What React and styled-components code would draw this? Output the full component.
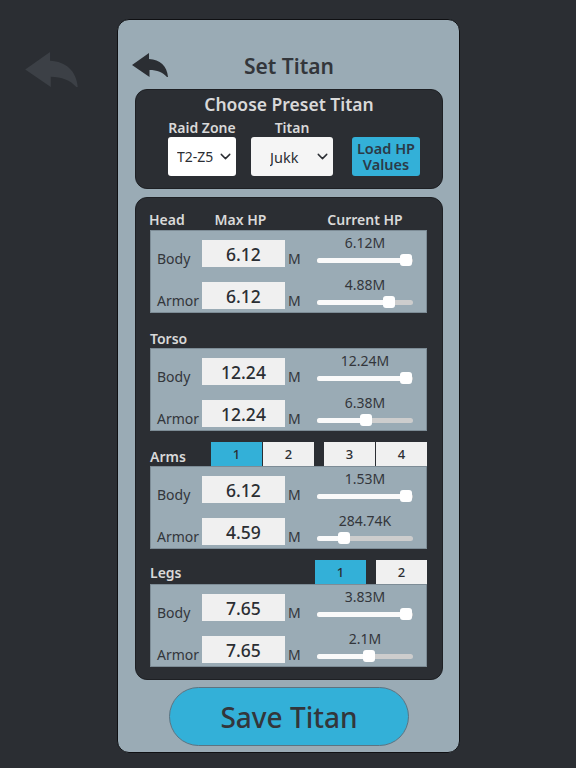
import React from "react";
import styled, { createGlobalStyle } from "styled-components";
import { ChevronDown } from "lucide-react";

const GlobalStyle = createGlobalStyle`
  * {
    box-sizing: border-box;
  }
  body {
    margin: 0;
    background-color: #2b2e33;
    font-family: "Noto Sans", "Open Sans", sans-serif;
    color: #2b2e33;
  }
`;

const Page = styled.div`
  position: relative;
  display: flex;
  justify-content: center;
  width: 576px;
  height: 768px;
  padding: 19px 0 0 1px;
`;

const GhostBack = styled.svg`
  position: absolute;
  left: 25px;
  top: 52px;
  width: 53px;
  height: 35px;
  fill: #3c4046;
`;

const Panel = styled.div`
  display: flex;
  flex-direction: column;
  width: 343px;
  height: 734px;
  padding: 0 16px 0 17px;
  background-color: #9aabb5;
  border: 1px solid #0f1013;
  border-radius: 12px;
`;

const Header = styled.div`
  display: grid;
  grid-template-columns: 36px 1fr 36px;
  align-items: center;
  height: 69px;
  padding-top: 31px;
  padding-bottom: 8px;
  h1 {
    margin: 0;
    font-size: 21px;
    line-height: 30px;
    font-weight: 600;
    text-align: center;
    color: #33363b;
  }
`;

const BackIcon = styled.svg`
  align-self: start;
  width: 36px;
  height: 24px;
  margin-left: -3px;
  margin-top: 2px;
  fill: #2b2e33;
`;

const Card = styled.div`
  background-color: #2b2e33;
  border: 1px solid #1e2024;
  border-radius: 12px;
`;

const PresetCard = styled(Card)`
  height: 100px;
  padding-top: 2px;
  h2 {
    margin: 0;
    font-size: 17.5px;
    line-height: 24px;
    font-weight: 600;
    text-align: center;
    color: #d9d9d9;
  }
`;

const PresetRow = styled.div`
  display: flex;
  align-items: flex-end;
  margin-top: 3px;
  padding-left: 32px;
`;

const Field = styled.div`
  display: flex;
  flex-direction: column;
  align-items: center;
  width: ${(p) => p.$width}px;
  margin-right: ${(p) => p.$gap}px;
  label {
    font-size: 14px;
    line-height: 18px;
    font-weight: 600;
    color: #d9d9d9;
  }
`;

const SelectBox = styled.div`
  position: relative;
  width: 100%;
  height: 39px;
  svg {
    position: absolute;
    right: 2px;
    top: 11px;
    width: 17px;
    height: 17px;
    color: #2b2e33;
    pointer-events: none;
  }
`;

const Select = styled.select`
  appearance: none;
  width: 100%;
  height: 100%;
  padding: 0 0 0 ${(p) => p.$pad}px;
  border: 0;
  border-radius: 3px;
  background-color: ${(p) => p.$bg};
  font-family: inherit;
  font-size: ${(p) => p.$size}px;
  color: #2b2e33;
`;

const LoadButton = styled.button`
  width: 68px;
  height: 39px;
  padding: 0 0 1px;
  border: 0;
  border-radius: 3px;
  background-color: #33b0d8;
  font-family: inherit;
  font-size: 14.5px;
  line-height: 16px;
  font-weight: 600;
  color: #2b3a48;
`;

const HpCard = styled(Card)`
  display: flex;
  flex-direction: column;
  gap: 11px;
  height: 483px;
  margin-top: 8px;
  padding: 8px 15px 0 14px;
`;

const SectionHead = styled.div`
  display: flex;
  align-items: ${(p) => (p.$centered ? "center" : "flex-end")};
  height: 24px;
  font-size: 14px;
  line-height: 19px;
  font-weight: 600;
  color: #d9d9d9;
`;

const ColumnHead = styled.div`
  display: grid;
  grid-template-columns: 50px 83px 35px 96px;
  align-items: end;
  height: 24px;
  margin-left: -1px;
  font-size: 14px;
  line-height: 20px;
  font-weight: 600;
  color: #d9d9d9;
  span + span {
    text-align: center;
  }
  span:nth-child(3) {
    grid-column: 4;
    white-space: nowrap;
  }
`;

const TabGroup = styled.div`
  display: flex;
  gap: 1px;
  margin-left: ${(p) => (p.$push ? "auto" : "0")};
  margin-right: ${(p) => p.$after || 0}px;
`;

const Tab = styled.button`
  width: 51px;
  height: 24px;
  padding: 0;
  border: 0;
  background-color: ${(p) => (p.$active ? "#33b0d8" : "#f0f0f0")};
  font-family: inherit;
  font-size: 13px;
  font-weight: 500;
  color: #2b2e33;
`;

const HpPanel = styled.div`
  display: flex;
  flex-direction: column;
  gap: 10px;
  height: 83px;
  padding: 4px 0 0 6px;
  background-color: #9aabb5;
  border: 1px solid #7d8c96;
`;

const Row = styled.div`
  display: grid;
  grid-template-columns: 45px 83px 32px 96px;
  align-items: end;
  height: 32px;
  font-size: 14px;
  line-height: 17px;
  color: #33363b;
`;

const HpInput = styled.input`
  width: 83px;
  height: 27px;
  padding: 0;
  border: 0;
  background-color: #f0f0f0;
  font-family: inherit;
  font-size: 17.5px;
  font-weight: 500;
  text-align: center;
  color: #2b2e33;
`;

const Unit = styled.span`
  padding-left: 3px;
`;

const SliderWrap = styled.div`
  display: flex;
  flex-direction: column;
  align-items: center;
  height: 32px;
  span {
    line-height: 16px;
    height: 16px;
  }
`;

const Track = styled.div`
  position: relative;
  width: 96px;
  height: 5px;
  margin-top: 7px;
  border-radius: 3px;
  background-color: #cdcdcd;
`;

const TrackFill = styled.div`
  height: 100%;
  border-radius: 3px;
  background-color: #fafafa;
`;

const Thumb = styled.div`
  position: absolute;
  top: -4px;
  width: 12px;
  height: 12px;
  margin-left: -6px;
  border-radius: 3px;
  background-color: #fff;
`;

const SaveButton = styled.button`
  align-self: center;
  width: 240px;
  height: 59px;
  margin-top: 7px;
  padding: 0;
  border: 1px solid #5c7482;
  border-radius: 30px;
  background-color: #33b0d8;
  font-family: inherit;
  font-size: 28px;
  font-weight: 500;
  color: #33363b;
`;

const BACK_PATH = "M0 12 L17 0 V6 C28 6.5 35 13 36 24 H35 C31 19.5 25 17 17.5 17 V24 Z";

const SECTIONS = [
  {
    name: "Torso",
    rows: [
      { label: "Body", max: "12.24", current: "12.24M", level: 1 },
      { label: "Armor", max: "12.24", current: "6.38M", level: 0.52 },
    ],
  },
  {
    name: "Arms",
    tabs: [[1, 2], [3, 4]],
    rows: [
      { label: "Body", max: "6.12", current: "1.53M", level: 1 },
      { label: "Armor", max: "4.59", current: "284.74K", level: 0.25 },
    ],
  },
  {
    name: "Legs",
    centered: true,
    tabs: [[1], [2]],
    rows: [
      { label: "Body", max: "7.65", current: "3.83M", level: 1 },
      { label: "Armor", max: "7.65", current: "2.1M", level: 0.55 },
    ],
  },
];

const HEAD_ROWS = [
  { label: "Body", max: "6.12", current: "6.12M", level: 1 },
  { label: "Armor", max: "6.12", current: "4.88M", level: 0.8 },
];

const Slider = ({ text, level }) => {
  // the thumb stays 6px inside each end of the track
  const center = 6 + (84 - 1) * level;
  return (
    <SliderWrap>
      <span>{text}</span>
      <Track>
        <TrackFill style={{ width: center }} />
        <Thumb style={{ left: center }} />
      </Track>
    </SliderWrap>
  );
};

const HpRows = ({ rows }) => (
  <HpPanel>
    {rows.map((row) => (
      <Row key={row.label}>
        <span>{row.label}</span>
        <HpInput value={row.max} readOnly />
        <Unit>M</Unit>
        <Slider text={row.current} level={row.level} />
      </Row>
    ))}
  </HpPanel>
);

const SectionTabs = ({ tabs }) => (
  <>
    {tabs.map((group, i) => (
      <TabGroup key={i} $push={i === 0} $after={i === 0 ? 10 : 0}>
        {group.map((n) => (
          <Tab key={n} $active={n === 1}>
            {n}
          </Tab>
        ))}
      </TabGroup>
    ))}
  </>
);

const App = () => {
  return (
    <Page>
      <GlobalStyle />
      <GhostBack viewBox="0 0 36 24">
        <path d={BACK_PATH} />
      </GhostBack>
      <Panel>
        <Header>
          <BackIcon viewBox="0 0 36 24">
            <path d={BACK_PATH} />
          </BackIcon>
          <h1>Set Titan</h1>
        </Header>
        <PresetCard>
          <h2>Choose Preset Titan</h2>
          <PresetRow>
            <Field $width={68} $gap={15}>
              <label>Raid Zone</label>
              <SelectBox>
                <Select $bg="#ffffff" $pad={9} $size={14} defaultValue="T2-Z5">
                  <option>T2-Z5</option>
                </Select>
                <ChevronDown />
              </SelectBox>
            </Field>
            <Field $width={82} $gap={19}>
              <label>Titan</label>
              <SelectBox>
                <Select $bg="#f5f5f5" $pad={19} $size={14.5} defaultValue="Jukk">
                  <option>Jukk</option>
                </Select>
                <ChevronDown />
              </SelectBox>
            </Field>
            <LoadButton>
              Load HP
              <br />
              Values
            </LoadButton>
          </PresetRow>
        </PresetCard>
        <HpCard>
          <div>
            <ColumnHead>
              <span>Head</span>
              <span>Max HP</span>
              <span>Current HP</span>
            </ColumnHead>
            <HpRows rows={HEAD_ROWS} />
          </div>
          {SECTIONS.map((section) => (
            <div key={section.name}>
              <SectionHead $centered={section.centered}>
                {section.name}
                {section.tabs && <SectionTabs tabs={section.tabs} />}
              </SectionHead>
              <HpRows rows={section.rows} />
            </div>
          ))}
        </HpCard>
        <SaveButton>Save Titan</SaveButton>
      </Panel>
    </Page>
  );
};

export default App;
